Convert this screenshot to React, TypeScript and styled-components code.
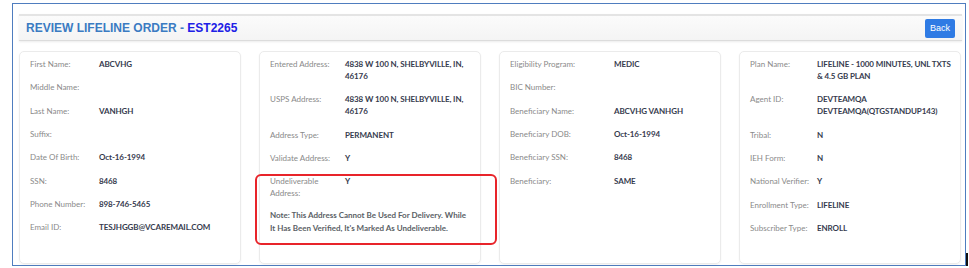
import React from "react";
import styled, { createGlobalStyle } from "styled-components";

const Global = createGlobalStyle`
  html, body { margin: 0; padding: 0; background: #ffffff; }
  body { font-family: Lato, "Open Sans", sans-serif; }
`;

const Frame = styled.div`
  position: relative;
  box-sizing: border-box;
  margin: 3px 0 0 12px;
  width: 954px;
  height: 263px;
  border: 1px solid #4f7dbf;
  padding: 10px 3px 1px 6px;
  display: flex;
  flex-direction: column;
  gap: 10px;
  background: #fff;
`;

const Header = styled.div`
  flex: none;
  box-sizing: border-box;
  height: 27px;
  display: flex;
  align-items: center;
  justify-content: space-between;
  padding: 0 7px 0 7px;
  background: linear-gradient(#fbfbfb, #f4f4f4);
  border-top: 2px solid #e4e4e4;
  border-bottom: 1px solid #dcdcdc;
  box-shadow: 0 1px 2px rgba(0, 0, 0, 0.08);
`;

const Title = styled.h1`
  margin: 0;
  font-family: "Liberation Sans", Arial, sans-serif;
  font-size: 12px;
  font-weight: 700;
  color: #3b7bc2;
`;

const OrderId = styled.span`
  color: #2020e6;
`;

const BackButton = styled.button`
  box-sizing: border-box;
  width: 30px;
  height: 19px;
  padding: 0;
  border: none;
  border-radius: 2px;
  background: #2f7be4;
  color: #fff;
  font-family: "Liberation Sans", Arial, sans-serif;
  font-size: 9px;
`;

const Cards = styled.div`
  flex: 1;
  min-height: 0;
  display: grid;
  grid-template-columns: repeat(4, 222px);
  column-gap: 18px;
`;

const Card = styled.div<{ $labelWidth: number }>`
  position: relative;
  box-sizing: border-box;
  border: 1px solid #ebebeb;
  border-radius: 5px;
  box-shadow: 0 1px 2px rgba(0, 0, 0, 0.05);
  padding: 0.5px 3px 0 10px;
  display: grid;
  grid-template-columns: ${(p) => p.$labelWidth}px 1fr;
  align-content: start;
`;

const Label = styled.div`
  padding: 5.65px 5px 5.65px 0;
  font-size: 8px;
  line-height: 12px;
  color: #8a8a8a;
`;

const Value = styled.div`
  padding: 5.65px 0;
  font-size: 8px;
  line-height: 12px;
  font-weight: 700;
  letter-spacing: -0.1px;
  color: #363b4e;
`;

const Note = styled.div`
  grid-column: 1 / -1;
  padding: 4.5px 8px 0 0;
  font-size: 8px;
  line-height: 13px;
  font-weight: 700;
  color: #5b5f66;
`;

const Highlight = styled.div`
  position: absolute;
  left: -5px;
  top: 122px;
  width: 242px;
  height: 71px;
  box-sizing: border-box;
  border: 2px solid #e8242a;
  border-radius: 6px;
  pointer-events: none;
`;

const Cursor = styled.div`
  position: absolute;
  right: -3px;
  bottom: -3px;
  width: 2px;
  height: 15px;
  background: #111;
`;

type Row = [string, React.ReactNode];

const rows1: Row[] = [
  ["First Name:", "ABCVHG"],
  ["Middle Name:", ""],
  ["Last Name:", "VANHGH"],
  ["Suffix:", ""],
  ["Date Of Birth:", "Oct-16-1994"],
  ["SSN:", "8468"],
  ["Phone Number:", "898-746-5465"],
  ["Email ID:", "TESJHGGB@VCAREMAIL.COM"],
];

const rows2: Row[] = [
  ["Entered Address:", "4838 W 100 N, SHELBYVILLE, IN, 46176"],
  ["USPS Address:", "4838 W 100 N, SHELBYVILLE, IN, 46176"],
  ["Address Type:", "PERMANENT"],
  ["Validate Address:", "Y"],
  ["Undeliverable Address:", "Y"],
];

const rows3: Row[] = [
  ["Eligibility Program:", "MEDIC"],
  ["BIC Number:", ""],
  ["Beneficiary Name:", "ABCVHG VANHGH"],
  ["Beneficiary DOB:", "Oct-16-1994"],
  ["Beneficiary SSN:", "8468"],
  ["Beneficiary:", "SAME"],
];

const rows4: Row[] = [
  ["Plan Name:", "LIFELINE - 1000 MINUTES, UNL TXTS & 4.5 GB PLAN"],
  ["Agent ID:", "DEVTEAMQA DEVTEAMQA(QTGSTANDUP143)"],
  ["Tribal:", "N"],
  ["IEH Form:", "N"],
  ["National Verifier:", "Y"],
  ["Enrollment Type:", "LIFELINE"],
  ["Subscriber Type:", "ENROLL"],
];

const renderRows = (rows: Row[]) =>
  rows.map(([l, v]) => (
    <React.Fragment key={l}>
      <Label>{l}</Label>
      <Value>{v}</Value>
    </React.Fragment>
  ));

export default function App() {
  return (
    <>
      <Global />
      <Frame>
        <Header>
          <Title>
            REVIEW LIFELINE ORDER - <OrderId>EST2265</OrderId>
          </Title>
          <BackButton>Back</BackButton>
        </Header>
        <Cards>
          <Card $labelWidth={69}>{renderRows(rows1)}</Card>
          <Card $labelWidth={75}>
            {renderRows(rows2)}
            <Note>
              Note: This Address Cannot Be Used For Delivery. While It Has Been
              Verified, It's Marked As Undeliverable.
            </Note>
            <Highlight />
          </Card>
          <Card $labelWidth={104}>{renderRows(rows3)}</Card>
          <Card $labelWidth={67}>{renderRows(rows4)}</Card>
        </Cards>
        <Cursor />
      </Frame>
    </>
  );
}
